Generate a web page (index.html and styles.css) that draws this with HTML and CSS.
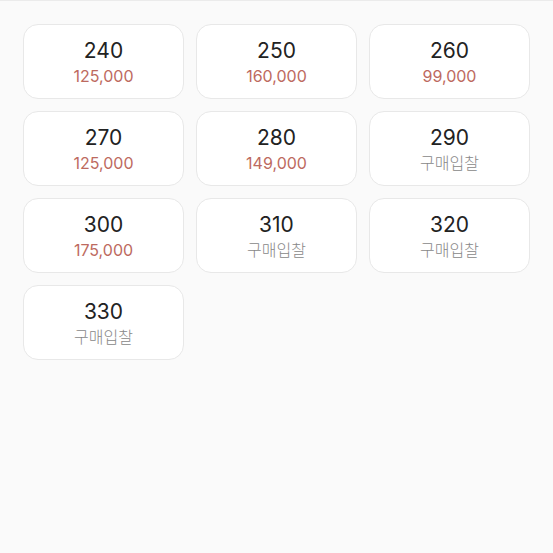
FILE: index.html
```html
<!DOCTYPE html>
<html lang="ko">
<head>
  <meta charset="UTF-8">
  <meta name="viewport" content="width=device-width, initial-scale=1.0">
  <title>사이즈 선택</title>
  <link rel="stylesheet" href="styles.css">
</head>
<body>
  <main class="size-sheet">
    <div class="size-grid">
      <button class="size-btn" type="button"><span class="size">240</span><span class="price">125,000</span></button>
      <button class="size-btn" type="button"><span class="size">250</span><span class="price">160,000</span></button>
      <button class="size-btn" type="button"><span class="size">260</span><span class="price">99,000</span></button>
      <button class="size-btn" type="button"><span class="size">270</span><span class="price">125,000</span></button>
      <button class="size-btn" type="button"><span class="size">280</span><span class="price">149,000</span></button>
      <button class="size-btn" type="button"><span class="size">290</span><span class="bid">구매입찰</span></button>
      <button class="size-btn" type="button"><span class="size">300</span><span class="price">175,000</span></button>
      <button class="size-btn" type="button"><span class="size">310</span><span class="bid">구매입찰</span></button>
      <button class="size-btn" type="button"><span class="size">320</span><span class="bid">구매입찰</span></button>
      <button class="size-btn" type="button"><span class="size">330</span><span class="bid">구매입찰</span></button>
    </div>
  </main>
</body>
</html>
```
FILE: styles.css
```css
body {
  margin: 0;
  min-height: 100vh;
  background: #fafafa;
  font-family: Inter, "Noto Sans CJK KR", sans-serif;
}

.size-sheet {
  border-top: 1px solid #ebebeb;
  padding: 23px;
}

.size-grid {
  display: grid;
  grid-template-columns: repeat(3, 1fr);
  gap: 12px;
}

.size-btn {
  display: flex;
  flex-direction: column;
  align-items: center;
  padding: 12px 0 10px;
  background: #fff;
  border: 1px solid #e8e8e8;
  border-radius: 15px;
  font-family: inherit;
  cursor: pointer;
}

.size {
  font-size: 21px;
  line-height: 27px;
  color: #222;
}

.price,
.bid {
  font-size: 16px;
  line-height: 24px;
}

.price {
  color: #bd6a60;
}

.bid {
  font-weight: 300;
  color: #888;
}
```
